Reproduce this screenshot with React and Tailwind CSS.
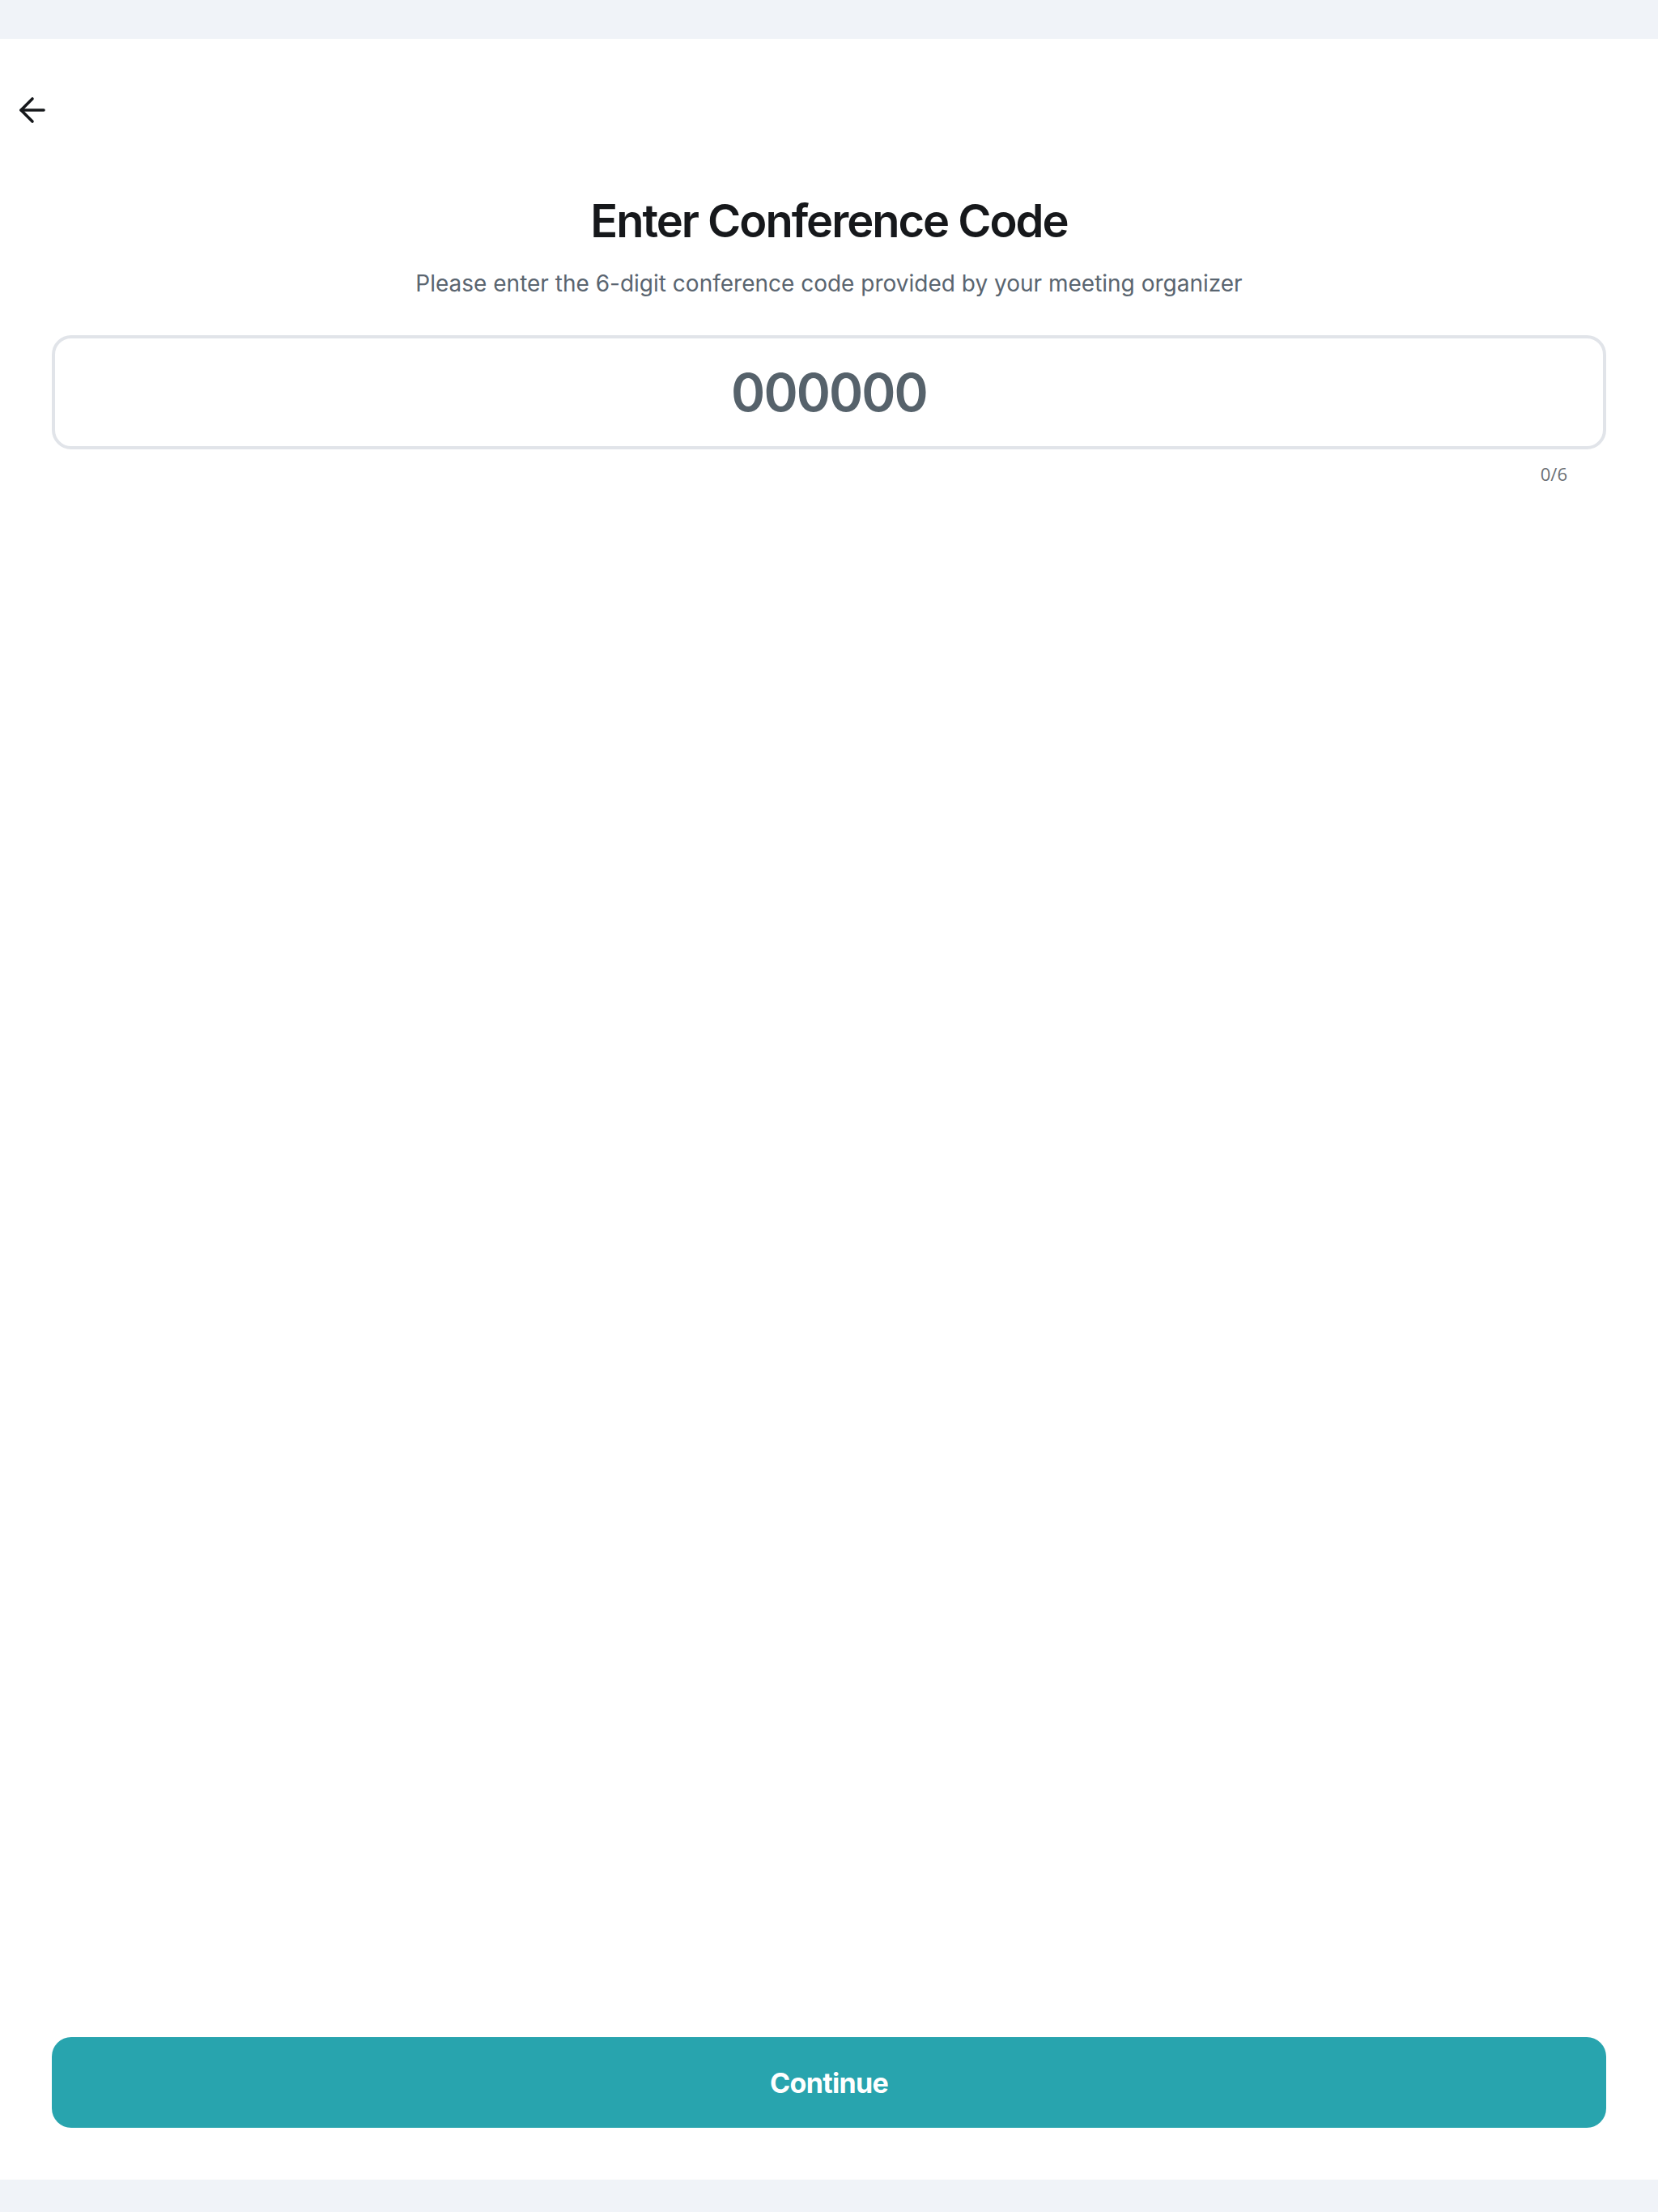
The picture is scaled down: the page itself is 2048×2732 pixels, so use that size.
import React from "react";
import { ArrowLeft } from "lucide-react";

export default function App() {
  return (
    <div className="flex h-[2732px] w-[2048px] flex-col bg-white font-['Inter',sans-serif]">
      <div className="h-[48px] shrink-0 bg-[#f0f3f8]" />
      <main className="flex flex-1 flex-col bg-white">
        <div className="pl-[16px] pt-[64px]">
          <button className="flex h-[48px] w-[48px] items-center justify-center text-[#16181b]">
            <ArrowLeft size={48} strokeWidth={1.8} />
          </button>
        </div>
        <h1 className="mt-[77px] text-center text-[56px] font-semibold leading-[72px] tracking-[-0.036em] text-[#16181b]">
          Enter Conference Code
        </h1>
        <p className="mt-[21px] text-center text-[28px] leading-[40px] text-[#5a6570]">
          Please enter the 6-digit conference code provided by your meeting organizer
        </p>
        <div className="mx-[64px] mt-[44px]">
          <input
            type="text"
            inputMode="numeric"
            maxLength={6}
            placeholder="000000"
            className="h-[141px] w-full rounded-[24px] border-[4px] border-[#e1e4e9] bg-white text-center font-['Inter',sans-serif] text-[64px] font-semibold tracking-[-0.03em] text-[#56626b] outline-none placeholder:text-[#56626b]"
          />
          <div className="mt-[14px] flex justify-end pr-[48px]">
            <span className="font-['Open_Sans',sans-serif] text-[22px] leading-[32px] text-[#6b6f74]">0/6</span>
          </div>
        </div>
        <div className="flex-1" />
        <div className="px-[64px] pb-[64px]">
          <button className="flex h-[112px] w-full items-center justify-center rounded-[24px] bg-[#28a4ae] text-[34px] font-bold tracking-[-0.02em] text-white">
            Continue
          </button>
        </div>
      </main>
      <div className="h-[40px] shrink-0 bg-[#f0f3f8]" />
    </div>
  );
}
